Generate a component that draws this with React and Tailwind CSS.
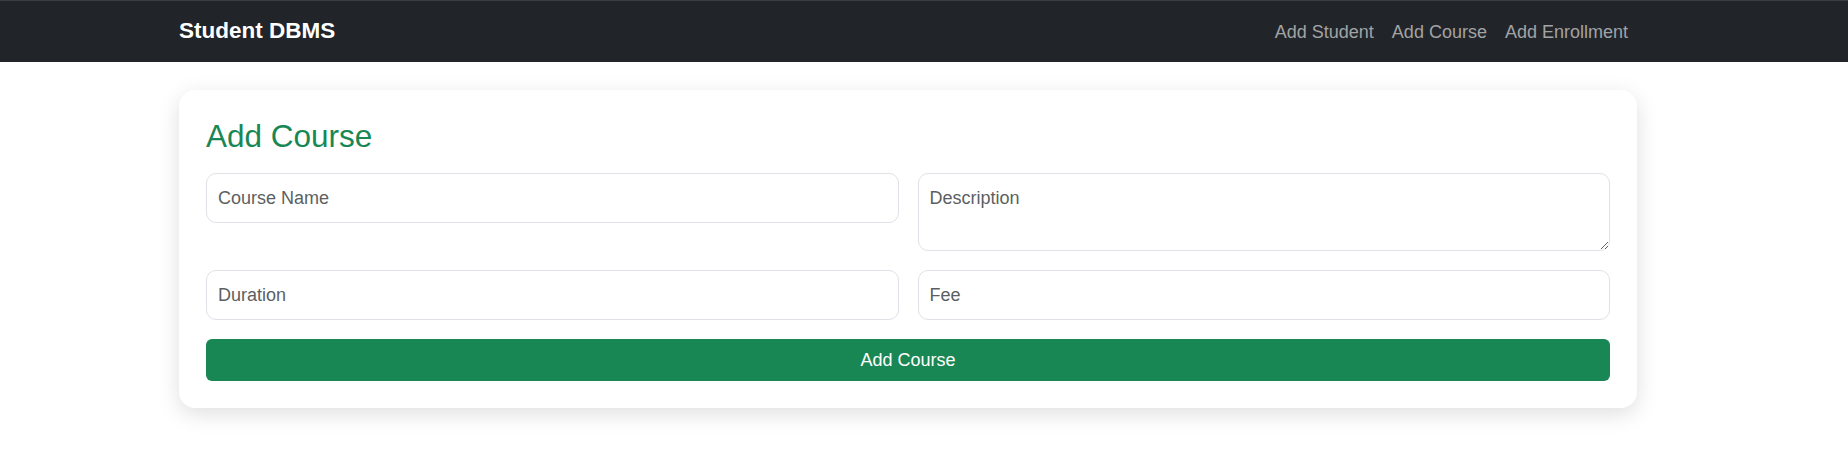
export default function App() {
  const font = { fontFamily: '"Liberation Sans", Arial, sans-serif' };
  return (
    <div className="min-h-[462px] bg-white" style={font}>
      <nav className="h-[62px] bg-[#212529] border-t border-[#3a3d41] flex items-center">
        <div className="ml-[179px] w-[1449px] flex items-center justify-between">
          <span className="text-[22.5px] font-bold text-white leading-none">Student DBMS</span>
          <div className="flex items-center gap-[18px] text-[18px] text-[#a1a3a5] leading-none">
            <span>Add Student</span>
            <span>Add Course</span>
            <span>Add Enrollment</span>
          </div>
        </div>
      </nav>
      <div className="pt-[28px] pl-[179px]">
        <div className="w-[1458px] bg-white rounded-[16px] shadow-[0_6px_22px_rgba(0,0,0,0.13)] px-[27px] pt-[27px] pb-[27px]">
          <h3 className="text-[31.5px] leading-[38px] text-[#198754] mb-[18px]">Add Course</h3>
          <div className="grid grid-cols-2 gap-x-[19px] gap-y-[19px] items-start">
            <input
              className="h-[50px] w-full rounded-[10px] border border-[#dee2e6] px-[11px] text-[18px] placeholder:text-[#5c5f62] outline-none"
              placeholder="Course Name"
            />
            <textarea
              className="h-[78px] w-full rounded-[10px] border border-[#dee2e6] px-[11px] py-[10.5px] text-[18px] leading-[27px] placeholder:text-[#5c5f62] outline-none block"
              placeholder="Description"
            />
            <input
              className="h-[50px] w-full rounded-[10px] border border-[#dee2e6] px-[11px] text-[18px] placeholder:text-[#5c5f62] outline-none"
              placeholder="Duration"
            />
            <input
              className="h-[50px] w-full rounded-[10px] border border-[#dee2e6] px-[11px] text-[18px] placeholder:text-[#5c5f62] outline-none"
              placeholder="Fee"
            />
          </div>
          <button className="mt-[19px] h-[42px] w-full rounded-[6px] bg-[#198754] text-white text-[18px]">
            Add Course
          </button>
        </div>
      </div>
    </div>
  );
}
